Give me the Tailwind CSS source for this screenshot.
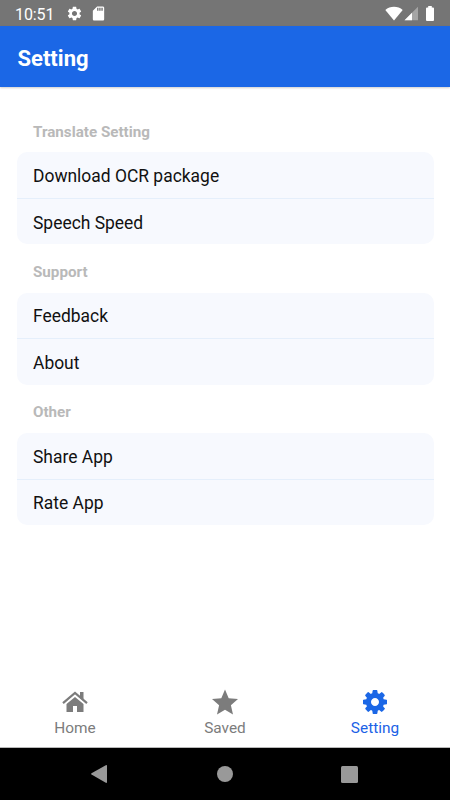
<!DOCTYPE html>
<html lang="en">
<head>
<meta charset="utf-8">
<title>Setting</title>
<script src="https://cdn.jsdelivr.net/npm/@tailwindcss/browser@4"></script>
</head>
<body class="w-[450px] h-[800px] overflow-hidden bg-white font-['Roboto',sans-serif] flex flex-col">
<div class="h-[26px] shrink-0 bg-[#757575] flex items-center pl-[15px] text-white">
  <span class="w-[51px] text-[16px] leading-[26px] pt-[3px] tracking-[-0.1px]">10:51</span>
  <svg class="w-[17px] h-[17px]" viewBox="0 0 24 24" fill="currentColor"><path d="M19.14 12.94c.04-.3.06-.61.06-.94 0-.32-.02-.64-.07-.94l2.03-1.58c.18-.14.23-.41.12-.61l-1.92-3.32c-.12-.22-.37-.29-.59-.22l-2.39.96c-.5-.38-1.03-.7-1.62-.94l-.36-2.54c-.04-.24-.24-.41-.48-.41h-3.84c-.24 0-.43.17-.47.41l-.36 2.54c-.59.24-1.13.57-1.62.94l-2.39-.96c-.22-.08-.47 0-.59.22L2.74 8.87c-.12.21-.08.47.12.61l2.03 1.58c-.05.3-.09.63-.09.94s.02.64.07.94l-2.03 1.58c-.18.14-.23.41-.12.61l1.92 3.32c.12.22.37.29.59.22l2.39-.96c.5.38 1.03.7 1.62.94l.36 2.54c.05.24.24.41.48.41h3.84c.24 0 .44-.17.47-.41l.36-2.54c.59-.24 1.13-.56 1.62-.94l2.39.96c.22.08.47 0 .59-.22l1.92-3.32c.12-.22.07-.47-.12-.61l-2.01-1.58zM12 15.6c-1.98 0-3.6-1.62-3.6-3.600s1.620-3.600 3.600-3.600 3.600 1.620 3.600 3.600-1.620 3.600-3.600 3.600z"/></svg>
  <svg class="w-[17px] h-[17px] ml-[7px]" viewBox="0 0 24 24" fill="currentColor"><path d="M18 2h-8L4.020 8 4 20c0 1.100.900 2 2 2h12c1.100 0 2-.900 2-2V4c0-1.100-.900-2-2-2zm-6 6h-2V4h2v4zm3 0h-2V4h2v4zm3 0h-2V4h2v4z"/></svg>
  <svg class="w-[18px] h-[15px] ml-auto" viewBox="0 0 18 15" fill="currentColor"><path d="M.3 4C5-.2 13-.2 17.700 4L9 14.500z"/></svg>
  <svg class="w-[14px] h-[15px] ml-[1px]" viewBox="0 0 14 15" fill="currentColor"><path opacity=".35" d="M14 .8V14.200H.5z"/><path d="M8 6.700V14.200H.5z"/></svg>
  <svg class="w-[8px] h-[15px] ml-[8px] mr-[16px]" viewBox="0 0 8 15" fill="currentColor"><path d="M2.200 0h3.600v1.500H7q1 0 1 1V14q0 1-1 1H1q-1 0-1-1V2.500q0-1 1-1h1.200z"/></svg>
</div>
<header class="h-[61px] shrink-0 bg-[#1b67e6] shadow-[0_1px_2px_rgba(0,0,0,0.2)] flex items-center pl-[17.5px] pt-[5px]">
  <h1 class="text-[22px] leading-7 font-bold text-white">Setting</h1>
</header>
<main class="flex-1 pl-[16.5px] pr-[16.5px] pt-[30px]">
  <section class="h-[140.5px]">
    <h2 class="h-[35px] pl-[16.5px] pt-[4.5px] text-[15.2px] leading-[20px] font-bold text-[#b9b9b9]">Translate Setting</h2>
    <ul class="h-[92px] rounded-[10px] bg-[#f7f9fe] text-[17.45px] text-[#111] overflow-hidden">
      <li class="h-[46.5px] border-b border-[#e5effb] pl-[16.5px] pt-[3px] flex items-center">Download OCR package</li>
      <li class="h-[45.5px] pl-[16.5px] pt-[3px] flex items-center">Speech Speed</li>
    </ul>
  </section>
  <section class="h-[140.5px]">
    <h2 class="h-[35px] pl-[16.5px] pt-[4px] text-[15.2px] leading-[20px] font-bold text-[#b9b9b9]">Support</h2>
    <ul class="h-[92px] rounded-[10px] bg-[#f7f9fe] text-[17.45px] text-[#111] overflow-hidden">
      <li class="h-[46.5px] border-b border-[#e5effb] pl-[16.5px] pt-[2px] flex items-center">Feedback</li>
      <li class="h-[45.5px] pl-[16.5px] pt-[2px] flex items-center">About</li>
    </ul>
  </section>
  <section class="h-[140.5px]">
    <h2 class="h-[35px] pl-[16.5px] pt-[4px] text-[15.2px] leading-[20px] font-bold text-[#b9b9b9]">Other</h2>
    <ul class="h-[92px] rounded-[10px] bg-[#f7f9fe] text-[17.45px] text-[#111] overflow-hidden">
      <li class="h-[46.5px] border-b border-[#e5effb] pl-[16.5px] pt-[3px] flex items-center">Share App</li>
      <li class="h-[45.5px] pl-[16.5px] pt-[2px] flex items-center">Rate App</li>
    </ul>
  </section>
</main>
<nav class="h-[61px] shrink-0 grid grid-cols-3 border-b border-[#b8b8b8] text-[#7c7c7c] text-[15.4px] leading-[20px]">
  <a class="flex flex-col items-center pt-[2px]">
    <svg class="w-[26px] h-[26px] mb-[3px]" viewBox="0 0 26 26"><path d="M4.500 15L13 8l8.500 7v8H15v-6h-4v6H4.500z" fill="currentColor"/><path d="M18 3h3.500v9L18 9z" fill="currentColor"/><path d="M1 14.200L13 4l12 10.200" fill="none" stroke="currentColor" stroke-width="2.200"/><path d="M3 15L13 6.500l10 8.500" fill="none" stroke="#fff" stroke-width=".7"/></svg>
    <span>Home</span>
  </a>
  <a class="flex flex-col items-center pt-[2px]">
    <svg class="w-[26px] h-[26px] mb-[3px]" viewBox="0 0 26 26" fill="currentColor"><path d="M13 .5l3.700 8.700 9.300.8-7.100 6.300L21 25.500l-8-4.800-8 4.800 2.100-9.200L0 10l9.300-.8z"/></svg>
    <span>Saved</span>
  </a>
  <a class="flex flex-col items-center pt-[2px] text-[#1b62e6]">
    <svg class="w-[24px] h-[24px] mt-px mb-[4px]" viewBox="128 128 1536 1536" fill="#1b67e6"><path d="M1152 896q0-106-75-181t-181-75-181 75-75 181 75 181 181 75 181-75 75-181zm512-109v222q0 12-8 23t-20 13l-185 28q-19 54-39 91 35 50 107 138 10 12 10 25t-9 23q-27 37-99 108t-94 71q-12 0-26-9l-138-108q-44 23-91 38-16 136-29 186-7 28-36 28h-222q-14 0-24.500-8.500t-11.500-21.500l-28-184q-49-16-90-37l-141 107q-10 9-25 9-14 0-25-11-126-114-165-168-7-10-7-23 0-12 8-23 15-21 51-66.500t54-70.500q-27-50-41-99l-183-27q-13-2-21-12.500t-8-23.500v-222q0-12 8-23t19-13l186-28q14-46 39-92-40-57-107-138-10-12-10-24 0-10 9-23 26-36 98.500-107.500t94.500-71.500q13 0 26 10l138 107q44-23 91-38 16-136 29-186 7-28 36-28h222q14 0 24.500 8.500t11.500 21.500l28 184q49 16 90 37l142-107q9-9 24-9 13 0 25 10 129 119 165 170 7 8 7 22 0 12-8 23-15 21-51 66.500t-54 70.500q26 50 41 98l183 28q13 2 21 12.500t8 23.500z"/></svg>
    <span>Setting</span>
  </a>
</nav>
<div class="h-[52px] shrink-0 bg-black flex items-center justify-between pl-[91px] pr-[92px] text-[#999]">
  <svg class="w-[16px] h-[18px]" viewBox="0 0 16 18" fill="currentColor"><path d="M.5 8.200Q-.3 9 .5 9.600L14.800 17.800Q16 18.200 16 17V1Q16-.3 14.800.3z"/></svg>
  <div class="w-[16px] h-[16px] ml-px rounded-full bg-[#999]"></div>
  <div class="w-[17px] h-[17px] rounded-[1.5px] bg-[#999]"></div>
</div>
</body>
</html>
